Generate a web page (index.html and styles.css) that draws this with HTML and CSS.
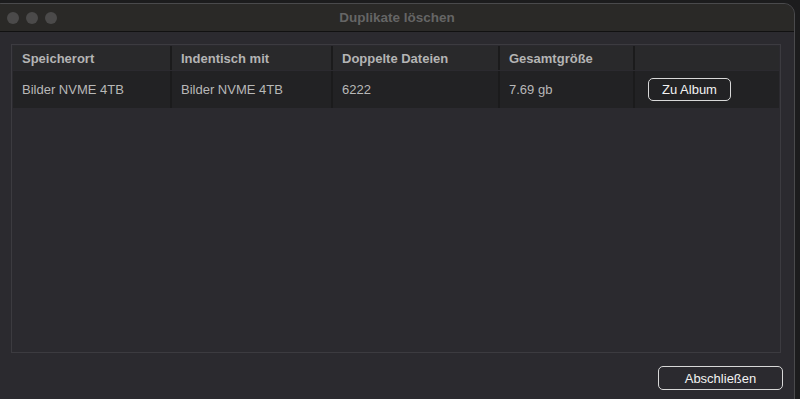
FILE: index.html
```html
<!DOCTYPE html>
<html lang="de">
<head>
<meta charset="utf-8">
<title>Duplikate löschen</title>
<link rel="stylesheet" href="styles.css">
</head>
<body>
<div class="window">
  <div class="titlebar">
    <div class="lights">
      <span class="light"></span><span class="light"></span><span class="light"></span>
    </div>
    <div class="title">Duplikate löschen</div>
  </div>
  <div class="content">
    <div class="table">
      <div class="row head">
        <div class="cell c1">Speicherort</div>
        <div class="cell c2">Indentisch mit</div>
        <div class="cell c3">Doppelte Dateien</div>
        <div class="cell c4">Gesamtgröße</div>
        <div class="cell c5"></div>
      </div>
      <div class="row data">
        <div class="cell c1">Bilder NVME 4TB</div>
        <div class="cell c2">Bilder NVME 4TB</div>
        <div class="cell c3">6222</div>
        <div class="cell c4">7.69 gb</div>
        <div class="cell c5"><button class="btn small">Zu Album</button></div>
      </div>
    </div>
    <div class="footer">
      <button class="btn close">Abschließen</button>
    </div>
  </div>
</div>
</body>
</html>
```
FILE: styles.css
```css
html, body {
  margin: 0;
  padding: 0;
  background: #1c1c1d;
  height: 399px;
  overflow: hidden;
  font-family: "Liberation Sans", Arial, sans-serif;
}
.window {
  margin-top: 3px;
  margin-left: -10px;
  width: 805px;
  height: 410px;
  border: 1px solid #4a4a4c;
  border-radius: 11px;
  background: #2b2a2f;
  overflow: hidden;
  display: flex;
  flex-direction: column;
  box-sizing: border-box;
}
.titlebar {
  height: 27px;
  background: #2a2927;
  border-bottom: 1px solid #111;
  display: flex;
  align-items: center;
  position: relative;
  flex: none;
}
.lights {
  display: flex;
  gap: 7px;
  padding-left: 16px;
}
.light {
  width: 12px;
  height: 12px;
  border-radius: 50%;
  background: #4b4a4a;
}
.title {
  position: absolute;
  left: 0;
  right: 0;
  top: 6px;
  text-align: center;
  color: #656565;
  font-weight: bold;
  font-size: 13.5px;
  padding-left: 9px;
}
.content {
  padding: 12px 13px 0 20px;
  flex: 1;
  display: flex;
  flex-direction: column;
}
.table {
  height: 309px;
  border: 1px solid #3c3b40;
  padding: 1px;
  box-sizing: border-box;
  display: flex;
  flex-direction: column;
  gap: 1px;
  background: #2b2a2f;
}
.row {
  display: flex;
  gap: 2px;
  background: #1b1b1c;
}
.head { height: 24px; }
.data { height: 37px; }
.cell {
  display: flex;
  align-items: center;
  padding-left: 9px;
  box-sizing: border-box;
  font-size: 13px;
}
.head .cell {
  background: #29292b;
  color: #b4b4b4;
  font-weight: bold;
}
.data .cell {
  background: #222224;
  color: #b8b8b8;
}
.c1 { width: 157px; }
.c2 { width: 159px; }
.c3 { width: 165px; }
.c4 { width: 133px; }
.c5 { flex: 1; padding-left: 13px; }
.btn {
  font-family: "Liberation Sans", Arial, sans-serif;
  background: transparent;
  color: #f2f2f2;
  border: 1px solid #d8d8d8;
  border-radius: 5px;
  font-size: 13px;
  padding: 0;
  cursor: pointer;
}
.small {
  width: 83px;
  height: 23px;
}
.footer {
  display: flex;
  justify-content: flex-end;
  padding-top: 13px;
  margin-right: -2px;
}
.close {
  width: 125px;
  height: 24px;
}
```
